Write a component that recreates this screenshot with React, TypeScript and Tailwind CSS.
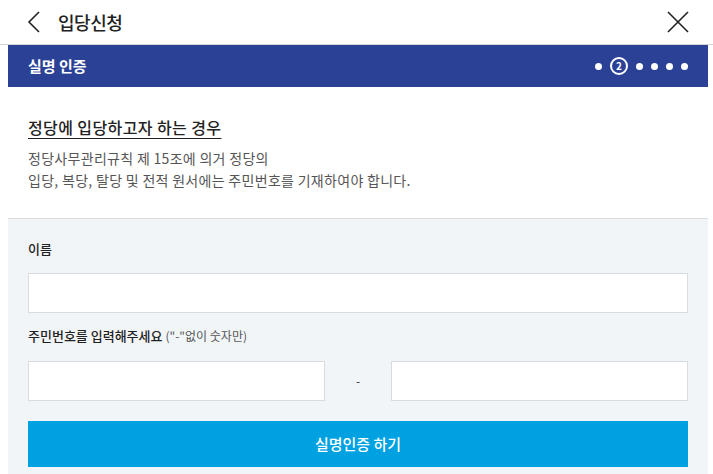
import React from 'react';

const font = { fontFamily: '"Noto Sans CJK KR", "Noto Sans", sans-serif' };

const App: React.FC = () => {
  const steps = [1, 2, 3, 4, 5, 6];

  return (
    <div className="w-[713px] h-[474px] bg-white overflow-hidden" style={font}>
      {/* Header */}
      <header className="h-[45px] flex items-center justify-between pl-[27px] pr-[24px] border-b border-[#d4d4d4]">
        <div className="flex items-center gap-[17px]">
          <svg width="14" height="22" viewBox="0 0 14 22" fill="none">
            <path d="M12 1 L2 11 L12 21" stroke="#222" strokeWidth="1.6" />
          </svg>
          <h1 className="text-[18px] font-medium text-[#222] tracking-tight">입당신청</h1>
        </div>
        <svg width="22" height="22" viewBox="0 0 22 22" fill="none">
          <path d="M1 1 L21 21 M21 1 L1 21" stroke="#222" strokeWidth="1.6" />
        </svg>
      </header>

      <div className="mx-[8px] w-[700px]">
        {/* Step bar */}
        <div className="h-[42px] bg-[#2a4196] flex items-center justify-between pl-[20px] pr-[20px]">
          <span className="text-[15px] font-bold text-white">실명 인증</span>
          <div className="flex items-center gap-[8px]">
            {steps.map((s) =>
              s === 2 ? (
                <div
                  key={s}
                  className="w-[18px] h-[18px] rounded-full border-2 border-white flex items-center justify-center text-[10px] font-bold text-white leading-none"
                >
                  2
                </div>
              ) : (
                <div key={s} className="w-[7px] h-[7px] rounded-full bg-white" />
              )
            )}
          </div>
        </div>

        {/* Notice */}
        <section className="px-[20px] pt-[29px] pb-[27px] border-b border-[#dcdcdc]">
          <h2 className="text-[16px] font-medium text-[#222] underline underline-offset-[4px] leading-[22px] tracking-[0.4px]">
            정당에 입당하고자 하는 경우
          </h2>
          <p className="mt-[9px] text-[14px] text-[#555] leading-[22px] tracking-[0.3px]">
            정당사무관리규칙 제 15조에 의거 정당의
            <br />
            입당, 복당, 탈당 및 전적 원서에는 주민번호를 기재하여야 합니다.
          </p>
        </section>

        {/* Form */}
        <section className="bg-[#f2f5f8] px-[20px] pt-[21px] pb-[10px]">
          <label className="block text-[13px] font-medium text-[#222] leading-[18px]">이름</label>
          <input className="mt-[15px] block w-full h-[40px] bg-white border border-[#d8dbdf] outline-none" />

          <label className="block mt-[14px] text-[13px] font-medium text-[#222] leading-[18px]">
            주민번호를 입력해주세요{' '}
            <span className="text-[12px] font-normal text-[#555]">("-"없이 숫자만)</span>
          </label>
          <div className="mt-[16px] flex items-center">
            <input className="w-[297px] h-[40px] bg-white border border-[#d8dbdf] outline-none" />
            <span className="flex-1 text-center text-[12px] text-[#333]">-</span>
            <input className="w-[297px] h-[40px] bg-white border border-[#d8dbdf] outline-none" />
          </div>

          <button className="mt-[20px] w-full h-[46px] bg-[#00a1e1] text-white text-[15px] font-medium">
            실명인증 하기
          </button>
        </section>
      </div>
    </div>
  );
};

export default App;
